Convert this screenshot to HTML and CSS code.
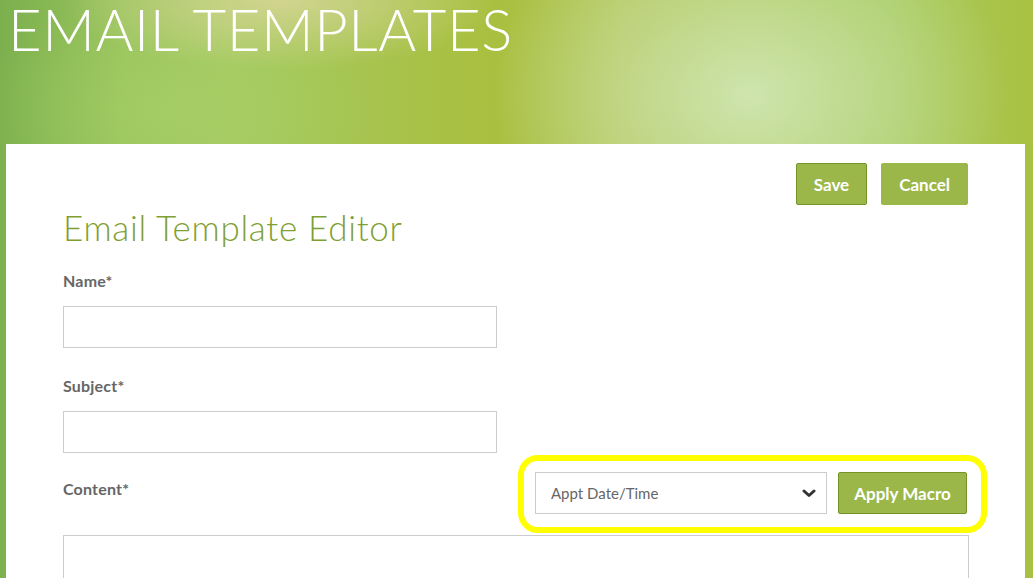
FILE: index.html
```html
<!DOCTYPE html>
<html lang="en">
  <head>
    <meta charset="UTF-8" />
    <meta name="viewport" content="width=device-width, initial-scale=1.0" />
    <title>Email Templates</title>
    <link rel="stylesheet" href="styles.css">
  </head>
  <body>
    <!-- Page banner -->
    <header class="banner">
      <h1 class="page-title">EMAIL TEMPLATES</h1>
    </header>

    <!-- Editor card -->
    <main class="card">
      <div class="toolbar">
        <button type="button" class="btn btn-outline">Save</button>
        <button type="button" class="btn">Cancel</button>
      </div>

      <h2 class="editor-title">Email Template Editor</h2>

      <form class="editor-form" id="template-form">
        <label for="name" class="label">Name*</label>
        <input type="text" id="name" name="name" class="form-input" />

        <label for="subject" class="label">Subject*</label>
        <input type="text" id="subject" name="subject" class="form-input" />

        <div class="content-row">
          <label for="content" class="label content-label">Content*</label>
          <div class="macro-box">
            <div class="select-wrap">
              <select class="macro-select" name="macro">
                <option>Appt Date/Time</option>
                <option>Client Name</option>
                <option>Location</option>
              </select>
              <svg class="chevron" width="14" height="9" viewBox="0 0 14 9">
                <path d="M2 2 L7 6.5 L12 2" fill="none" stroke="#333" stroke-width="3" stroke-linecap="round" stroke-linejoin="round"/>
              </svg>
            </div>
            <button type="button" class="btn btn-outline btn-macro">Apply Macro</button>
          </div>
        </div>

        <textarea id="content" name="content" class="form-area"></textarea>
      </form>
    </main>
  </body>
</html>
```

FILE: styles.css
```css
html,
body {
  height: 100%;
}
body {
  margin: 0;
  overflow: hidden;
  font-family: "Lato", "Open Sans", sans-serif;
  background:
    radial-gradient(ellipse 260px 200px at 750px 95px, rgba(208, 230, 178, 0.95), rgba(208, 230, 178, 0) 100%),
    radial-gradient(ellipse 220px 70px at 280px 0px, rgba(214, 214, 150, 0.9), rgba(214, 214, 150, 0) 100%),
    radial-gradient(ellipse 200px 120px at 180px 110px, rgba(168, 208, 104, 0.7), rgba(168, 208, 104, 0) 100%),
    linear-gradient(to right, #7cb04e 0%, #98c35c 12%, #a4c95f 22%, #a9bf3f 48%, #b3c65a 60%, #a7cb60 86%, #a9c142 100%);
}
.banner {
  height: 144px;
  padding: 0 0 0 8px;
  box-sizing: border-box;
}
.page-title {
  margin: 0;
  font-size: 58px;
  font-weight: 300;
  line-height: 58px;
  color: #fff;
  letter-spacing: 0.01em;
}
.card {
  background: #fff;
  margin: 0 8px 0 6px;
  padding: 19px 57px 0 57px;
  height: 600px;
}
.toolbar {
  display: flex;
  justify-content: flex-end;
  gap: 14px;
}
.btn {
  height: 42px;
  border: 1px solid #9bb74a;
  border-radius: 2px;
  background-color: #9bb74a;
  color: #fff;
  font-family: inherit;
  font-size: 17px;
  font-weight: 700;
  padding: 0 17px;
}
.btn-outline {
  border-color: #779327;
}
.editor-title {
  margin: 1px 0 0 0;
  font-size: 35px;
  line-height: 42px;
  font-weight: 300;
  color: #7f9f33;
  letter-spacing: 0.7px;
}
.editor-form {
  display: flex;
  flex-direction: column;
  align-items: flex-start;
}
.label {
  display: block;
  font-size: 16px;
  line-height: 18px;
  font-weight: 700;
  color: #666;
  letter-spacing: 0.2px;
}
.editor-title + .editor-form > .label:first-child {
  margin-top: 24px;
}
.form-input {
  margin: 16px 0 29px 0;
  width: 434px;
  height: 42px;
  box-sizing: border-box;
  border: 1px solid #ccc;
  outline: none;
}
.form-input + .content-row {
  margin-top: -27px;
}
.content-row {
  display: flex;
  justify-content: space-between;
  align-items: flex-start;
  width: 100%;
}
.content-label {
  margin-top: 25px;
}
.macro-box {
  display: flex;
  gap: 11px;
  border: 6px solid #ffff00;
  border-radius: 20px;
  padding: 11px 14px 13px 11px;
  margin-right: -19px;
}
.select-wrap {
  position: relative;
}
.macro-select {
  appearance: none;
  width: 292px;
  height: 42px;
  border: 1px solid #ccc;
  border-radius: 0;
  background: #fff;
  padding: 0 15px;
  font-family: inherit;
  font-size: 15px;
  color: #666;
}
.chevron {
  position: absolute;
  right: 11px;
  top: 17px;
}
.btn-macro {
  width: 129px;
  padding: 0;
}
.form-area {
  margin-top: 2px;
  width: 906px;
  height: 160px;
  box-sizing: border-box;
  border: 1px solid #ccc;
  resize: none;
}
```
